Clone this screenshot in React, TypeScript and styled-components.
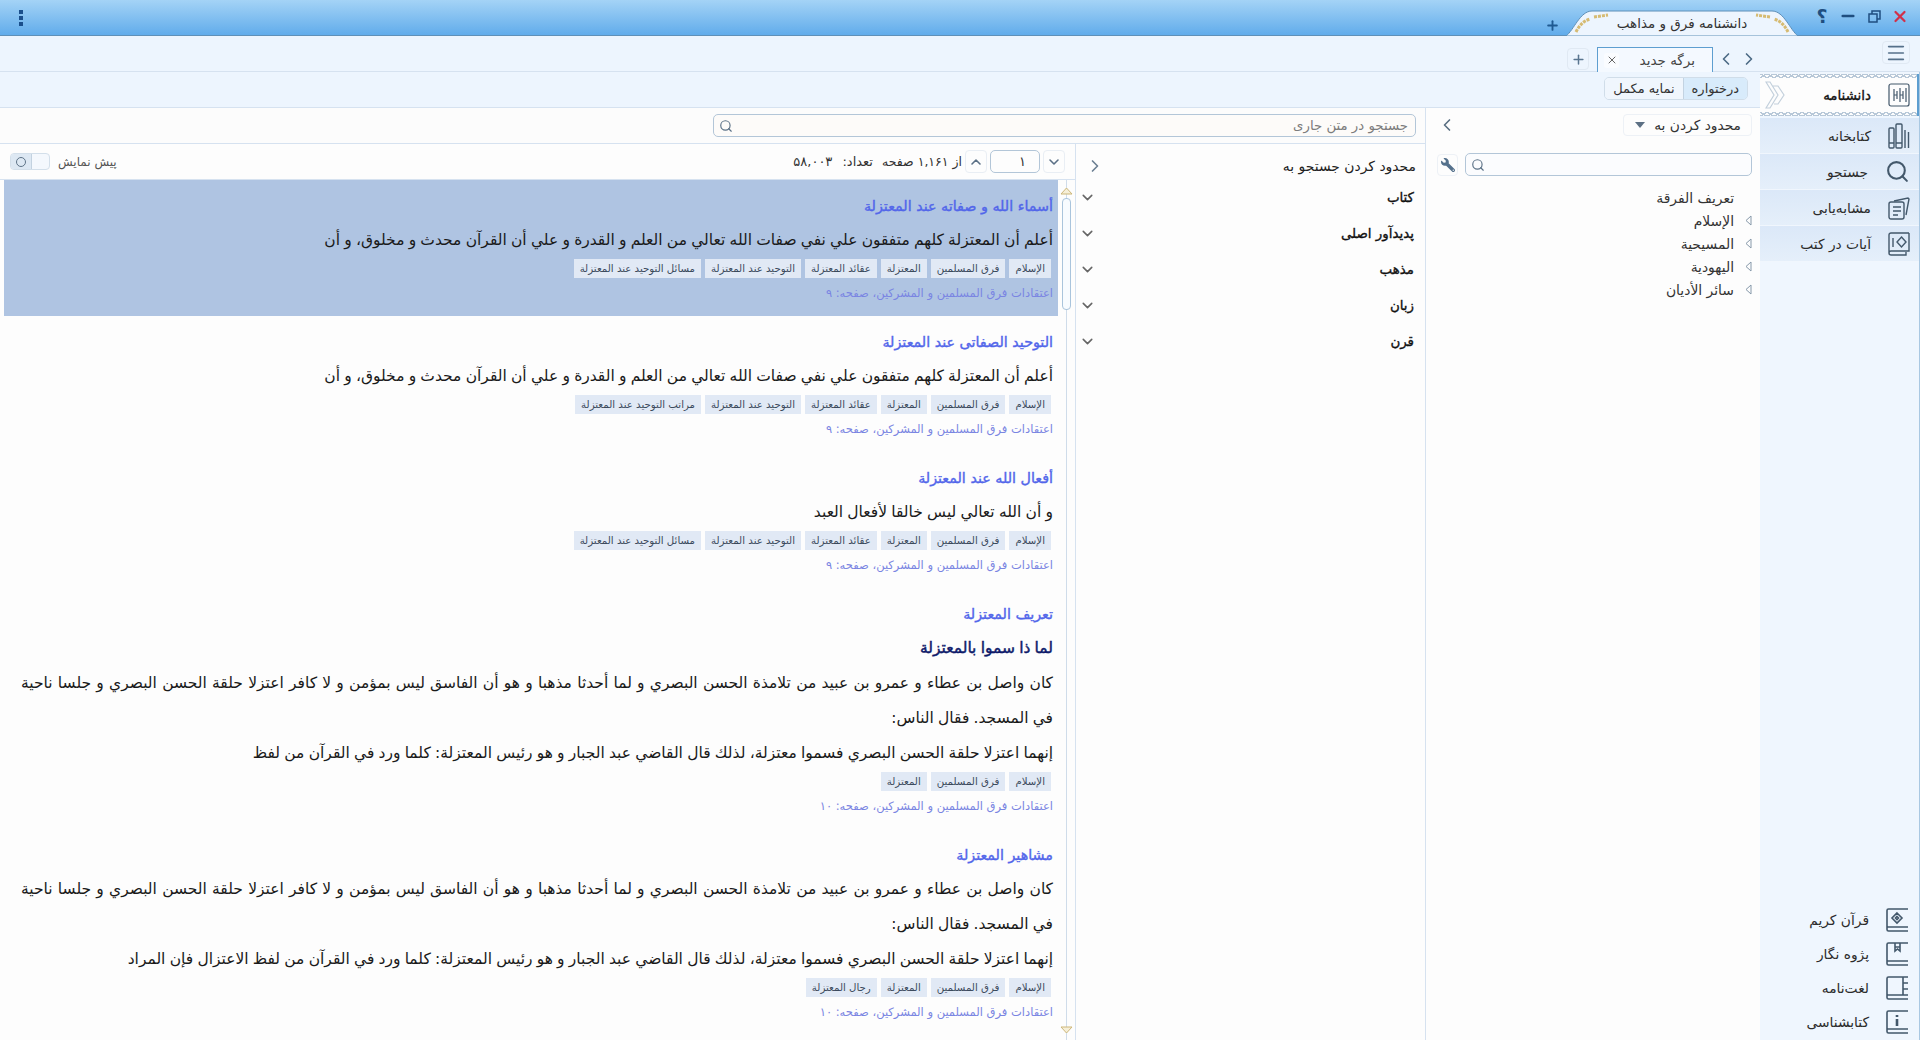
import { ReactNode } from 'react';
import styled, { createGlobalStyle } from 'styled-components';
import { ChevronDown, ChevronLeft, ChevronRight, ChevronUp, Menu, Minus, Plus, Search, X } from 'lucide-react';
import { FaWrench } from 'react-icons/fa';

const UI_FONT = `"DejaVu Sans", "Noto Sans", sans-serif`;

const GlobalStyle = createGlobalStyle`
  html, body { margin: 0; height: 100%; overflow: hidden; background: #fdfdfd; }
  #root { height: 100%; }
  * { box-sizing: border-box; }
`;

const Page = styled.div`
  height: 1040px;
  display: flex;
  flex-direction: column;
  font-family: ${UI_FONT};
  color: #222;
  background: #fdfdfd;
`;

const TitleBar = styled.div`
  height: 36px;
  flex: none;
  display: flex;
  align-items: flex-end;
  padding: 0 11px 0 14px;
  background: linear-gradient(#a4d3f6, #61aceb);
  border-bottom: 1px solid #5f90b8;
`;

const WindowButtons = styled.div`
  display: flex;
  align-items: center;
  gap: 8px;
  height: 35px;
  padding-bottom: 3px;
  margin-left: 15px;
`;

const WindowButton = styled.div`
  width: 18px;
  height: 18px;
  display: flex;
  align-items: center;
  justify-content: center;
  color: #1f4e80;
  font-size: 19px;
  font-weight: bold;
`;

const DocTab = styled.div`
  position: relative;
  width: 232px;
  height: 26px;
  margin-bottom: -1px;
  display: flex;
  align-items: center;
  justify-content: center;
  font-size: 13.5px;
  color: #333;
`;

const DocTabShape = styled.svg`
  position: absolute;
  inset: 0;
`;

const DocTabLabel = styled.span`
  position: relative;
`;

const AddDoc = styled.div`
  color: #1f5a92;
  display: flex;
  margin: 0 6px 2px 0;
`;

const Dots = styled.div`
  margin: 0 auto 9px 0;
  display: flex;
  flex-direction: column;
  gap: 2px;
  padding-left: 5px;
  span {
    width: 4px;
    height: 4px;
    background: #1a4f8c;
  }
`;

const TabBar = styled.div`
  height: 36px;
  flex: none;
  display: flex;
  align-items: flex-end;
  padding-right: 10px;
  background: #edf5fe;
  border-bottom: 1px solid #d6e2f0;
`;

const Hamburger = styled.div`
  width: 28px;
  height: 23px;
  margin: 0 0 7px 0;
  display: flex;
  align-items: center;
  justify-content: center;
  color: #55708a;
  border: 1px solid #e0e9f3;
  border-radius: 4px;
`;

const TabNav = styled.div`
  display: flex;
  gap: 3px;
  margin: 0 123px 2px 0;
  color: #4c6a85;
  svg { display: block; }
`;

const PageTab = styled.div`
  width: 116px;
  height: 25px;
  margin: 0 3px -1px 0;
  display: flex;
  align-items: center;
  justify-content: space-between;
  padding: 0 17px 0 6px;
  font-size: 13.5px;
  color: #444;
  background: #f4f9ff;
  border: 1px solid #5d9ed0;
  border-bottom: none;
`;

const TabClose = styled.span`
  width: 15px;
  height: 15px;
  display: flex;
  align-items: center;
  justify-content: center;
  color: #555;
  background: #fafcff;
  border-radius: 3px;
`;

const AddTab = styled.div`
  width: 22px;
  height: 22px;
  margin: 0 8px 1px 0;
  display: flex;
  align-items: center;
  justify-content: center;
  color: #5a7690;
  border: 1px solid #e0e9f3;
  border-radius: 4px;
`;

const Body = styled.div`
  flex: 1;
  min-height: 0;
  display: flex;
`;

const Rail = styled.nav`
  width: 160px;
  flex: none;
  display: flex;
  flex-direction: column;
  padding-top: 2px;
  background: #eff6fe;
  border-right: 1px solid #a9c8e2;
`;

const RailItem = styled.div`
  height: 36px;
  display: flex;
  align-items: center;
  gap: 17px;
  padding-right: 9px;
  font-size: 13.8px;
  color: #2c2c2c;
  background: linear-gradient(#dbe8f8, #e5effa);
  border-bottom: 1px solid #f0f6fd;
  svg { flex: none; color: #43586b; }
`;

const RailActive = styled(RailItem)`
  position: relative;
  height: 42px;
  margin-bottom: 2px;
  font-size: 13.4px;
  -webkit-text-stroke: 0.35px #111;
  color: #111;
  background: #fdfdfd;
  border-bottom: none;
  border-right: 2px solid #5d9ed0;
  padding-right: 7px;
  &::before, &::after {
    content: '';
    position: absolute;
    left: 0;
    right: 0;
    height: 5px;
    background-size: 7px 5px;
    background-repeat: repeat-x;
  }
  &::before {
    top: 0;
    background-image: linear-gradient(-33deg, transparent 50%, #b8c8d8 50%, #b8c8d8 65%, transparent 65%), linear-gradient(33deg, transparent 50%, #b8c8d8 50%, #b8c8d8 65%, transparent 65%);
  }
  &::after {
    bottom: 0;
    background-image: linear-gradient(147deg, transparent 50%, #b8c8d8 50%, #b8c8d8 65%, transparent 65%), linear-gradient(-147deg, transparent 50%, #b8c8d8 50%, #b8c8d8 65%, transparent 65%);
  }
`;

const RailChevrons = styled.svg`
  position: absolute;
  left: 5px;
  top: 7px;
`;

const RailBottom = styled.div`
  margin-top: auto;
  display: flex;
  flex-direction: column;
  padding-bottom: 1px;
`;

const RailLink = styled.div`
  height: 34px;
  display: flex;
  align-items: center;
  gap: 17px;
  font-size: 13.8px;
  color: #2c2c2c;
  padding-right: 11px;
  svg { flex: none; color: #43586b; }
`;

const Content = styled.div`
  flex: 1;
  min-width: 0;
  display: flex;
  flex-direction: column;
`;

const Toolbar = styled.div`
  height: 36px;
  flex: none;
  display: flex;
  align-items: center;
  padding-right: 12px;
  padding-bottom: 2px;
  background: #edf5fe;
  border-bottom: 1px solid #d6e2f0;
`;

const Segmented = styled.div`
  display: flex;
  height: 23px;
  border: 1px solid #d0dde9;
  border-radius: 5px;
  overflow: hidden;
`;

const Segment = styled.div<{ $on?: boolean }>`
  padding: 0 8px;
  display: flex;
  align-items: center;
  font-size: 13px;
  color: #333;
  background: ${p => (p.$on ? '#d8ebfb' : '#f0f6fd')};
  border-left: ${p => (p.$on ? '1px solid #c3d3e2' : 'none')};
`;

const Panels = styled.div`
  flex: 1;
  min-height: 0;
  display: flex;
`;

const TreePanel = styled.aside`
  width: 335px;
  flex: none;
  display: flex;
  flex-direction: column;
  padding: 6px 8px 0 11px;
  background: #fdfdfd;
  border-left: 1px solid #d6e2f0;
`;

const TreeTop = styled.div`
  display: flex;
  align-items: center;
  justify-content: space-between;
  height: 22px;
  color: #5a6f82;
`;

const ScopeSelect = styled.div`
  width: 129px;
  height: 22px;
  display: flex;
  align-items: center;
  justify-content: space-between;
  padding: 0 10px 0 11px;
  font-size: 13.8px;
  color: #333;
  border: 1px solid #edf1f6;
  border-radius: 4px;
`;

const Caret = styled.span`
  width: 0;
  height: 0;
  border: 5px solid transparent;
  border-top: 6px solid #5c7084;
  border-bottom: none;
`;

const TreeSearch = styled.div`
  display: flex;
  align-items: center;
  gap: 7px;
  margin-top: 17px;
`;

const SearchBox = styled.div`
  flex: 1;
  height: 23px;
  display: flex;
  align-items: center;
  padding: 0 7px 0 5px;
  color: #5c7287;
  background: #fbfcfe;
  border: 1px solid #b3c6d8;
  border-radius: 5px;
  font-size: 13px;
`;

const Placeholder = styled.span`
  flex: 1;
  color: #7c7c7c;
  font-size: 13.3px;
`;

const ToolButton = styled.div`
  width: 21px;
  height: 22px;
  display: flex;
  align-items: center;
  justify-content: center;
  color: #55718c;
  border: 1px solid #edf1f6;
  border-radius: 4px;
  svg { transform: scaleX(-1); }
`;

const TreeList = styled.ul`
  list-style: none;
  margin: 10px 0 0;
  padding: 0;
`;

const TreeRow = styled.li`
  height: 23px;
  display: flex;
  align-items: center;
  gap: 11px;
  font-size: 13.9px;
  color: #333;
`;

const TreeArrow = styled.svg<{ $hidden?: boolean }>`
  flex: none;
  color: #8799aa;
  visibility: ${p => (p.$hidden ? 'hidden' : 'visible')};
`;

const Main = styled.main`
  flex: 1;
  min-width: 0;
  display: flex;
  flex-direction: column;
`;

const SearchRow = styled.div`
  height: 36px;
  flex: none;
  padding: 6px 9px 0 9px;
  border-bottom: 1px solid #d6e2f0;
  background: #fcfcfc;
`;

const TextSearch = styled(SearchBox)`
  width: 703px;
  background: #fdfbf9;
`;

const Columns = styled.div`
  flex: 1;
  min-height: 0;
  display: flex;
`;

const FilterPanel = styled.aside`
  width: 350px;
  flex: none;
  padding: 0 9px 0 0;
  border-left: 1px solid #d6e2f0;
`;

const FilterHead = styled.div`
  height: 35px;
  padding: 8px 0 0 9px;
  display: flex;
  align-items: center;
  justify-content: space-between;
  font-size: 13.9px;
  color: #222;
  svg { color: #6b7f92; }
`;

const FilterRow = styled.div`
  height: 36px;
  display: flex;
  align-items: center;
  justify-content: space-between;
  padding: 0 2px 0 3px;
  font-size: 13.4px;
  -webkit-text-stroke: 0.35px #111;
  color: #111;
  svg { color: #666; }
`;

const Results = styled.section`
  flex: 1;
  min-width: 0;
  display: flex;
  flex-direction: column;
`;

const ResultsHead = styled.div`
  height: 36px;
  flex: none;
  display: flex;
  align-items: center;
  padding: 0 10px 0 10px;
  font-size: 12.5px;
  color: #333;
  border-bottom: 1px solid #d6e2f0;
`;

const Pager = styled.div`
  width: 22px;
  height: 23px;
  display: flex;
  align-items: center;
  justify-content: center;
  color: #5b7086;
  border: 1px solid #e9eef4;
  border-radius: 4px;
`;

const PageInput = styled.div`
  width: 50px;
  height: 23px;
  margin: 0 3px;
  display: flex;
  align-items: center;
  padding: 0 13px;
  font-size: 13px;
  border: 1px solid #b3c6d8;
  border-radius: 5px;
`;

const PagerText = styled.span`
  margin-right: 3px;
`;

const CountText = styled.span`
  margin-right: 9px;
  font-size: 13px;
  word-spacing: 6px;
`;

const Preview = styled.div`
  margin-right: auto;
  display: flex;
  align-items: center;
  gap: 8px;
  font-size: 12px;
  color: #555;
`;

const Toggle = styled.div`
  width: 40px;
  height: 17px;
  display: flex;
  justify-content: flex-end;
  border: 1px solid #d3dfea;
  border-radius: 4px;
  background: #f4f8fd;
  span {
    width: 21px;
    display: flex;
    align-items: center;
    justify-content: center;
    background: #dde8f3;
    border-right: 1px solid #c3d2e0;
    border-radius: 3px 0 0 3px;
  }
  span::after {
    content: '';
    width: 8px;
    height: 8px;
    border: 1px solid #5f7488;
    border-radius: 50%;
  }
`;

const ResultsBody = styled.div`
  flex: 1;
  min-height: 0;
  display: flex;
`;

const Track = styled.div`
  position: relative;
  width: 17px;
  flex: none;
  display: flex;
  flex-direction: column;
  align-items: center;
  padding-top: 7px;
  padding-bottom: 6px;
  &::before {
    content: '';
    position: absolute;
    top: 0;
    bottom: 0;
    left: 8px;
    width: 1px;
    background: #cfdcea;
  }
`;

const Thumb = styled.div`
  position: relative;
  width: 9px;
  height: 112px;
  margin-top: 3px;
  background: #f7fbff;
  border: 1px solid #a9c4dc;
  border-radius: 4px;
`;

const TrackArrow = styled.svg<{ $end?: boolean }>`
  position: relative;
  margin-top: ${p => (p.$end ? 'auto' : '0')};
`;

const List = styled.div`
  flex: 1;
  min-width: 0;
  margin-left: 4px;
  overflow: hidden;
`;

const Row = styled.article<{ $selected?: boolean }>`
  padding: 9px 5px 11px 17px;
  background: ${p => (p.$selected ? '#afc4e2' : 'transparent')};
`;

const RowTitle = styled.h3`
  margin: 0;
  height: 35px;
  line-height: 35px;
  font-size: 14.3px;
  font-weight: normal;
  -webkit-text-stroke: 0.4px #5266ea;
  color: #5266ea;
`;

const Line = styled.p<{ $strong?: boolean; $full?: boolean }>`
  margin: 0;
  height: 35px;
  line-height: 33px;
  white-space: ${p => (p.$full ? 'normal' : 'nowrap')};
  text-align-last: ${p => (p.$full ? 'justify' : 'auto')};
  font-size: 15.5px;
  word-spacing: ${p => (p.$full ? '0' : '-0.7px')};
  -webkit-text-stroke: ${p => (p.$strong ? '0.45px #0e1a6a' : '0')};
  color: ${p => (p.$strong ? '#0e1a6a' : '#1a1a1a')};
`;

const Tags = styled.div`
  height: 19px;
  display: flex;
  gap: 4px;
  padding-right: 2px;
`;

const Tag = styled.span`
  height: 19px;
  line-height: 19px;
  padding: 0 6px;
  font-size: 10.2px;
  color: #3b4a5c;
  background: #e1e9f5;
  white-space: nowrap;
`;

const Source = styled.div`
  height: 24px;
  margin-top: 3px;
  line-height: 24px;
  font-size: 11.5px;
  color: #7a85e2;
`;

const Arrow = ({ hidden }: { hidden?: boolean }) => (
  <TreeArrow $hidden={hidden} width="7" height="11" viewBox="0 0 7 11" fill="none" stroke="currentColor">
    <path d="M6 1 1 5.5 6 10Z" />
  </TreeArrow>
);

const BookIcon = ({ children }: { children?: ReactNode }) => (
  <svg width="22" height="24" viewBox="0 0 22 24" fill="none" stroke="currentColor" strokeWidth="1.6">
    <path d="M22 1H2.5A1.5 1.5 0 0 0 1 2.5v19A1.5 1.5 0 0 0 2.5 23H22M1 19.5A1.5 1.5 0 0 1 2.5 19H22" />
    {children}
  </svg>
);

const EncyclopediaIcon = () => (
  <svg width="22" height="24" viewBox="0 0 22 24" fill="none" stroke="currentColor" strokeWidth="1.2">
    <rect x="1" y="1" width="20" height="22" rx="2" />
    <path d="M6 6v12M9 8v8M6 12h3M12 5v14M15 8v8M12 12h3M18 5v14" />
  </svg>
);

const LibraryIcon = () => (
  <svg width="22" height="26" viewBox="0 0 22 26" fill="none" stroke="currentColor" strokeWidth="1.4">
    <rect x="1" y="5" width="5" height="20" rx="1" />
    <rect x="8" y="1" width="6" height="24" rx="1" />
    <path d="M17 7v18M20.5 9v16M1 20h5M8 20h6" />
  </svg>
);

const SimilarIcon = () => (
  <svg width="22" height="24" viewBox="0 0 22 24" fill="none" stroke="currentColor" strokeWidth="1.4">
    <path d="M6 5 20 2l1 1-3 16" />
    <rect x="1" y="6" width="15" height="17" rx="2" />
    <path d="M5 11h8M5 15h8M5 19h5" />
  </svg>
);

const VersesIcon = () => (
  <svg width="22" height="24" viewBox="0 0 22 24" fill="none" stroke="currentColor" strokeWidth="1.4">
    <path d="M21 1H3a2 2 0 0 0-2 2v18a2 2 0 0 0 2 2h15v-3M1 21a2 2 0 0 1 2-2h18V1" />
    <path d="M5 6v9" />
    <path d="m13.5 5 4.5 5-4.5 5-4.5-5Z" />
  </svg>
);

const RESULT_TAGS = ['الإسلام', 'فرق المسلمين', 'المعتزلة'];
const SOURCE = 'اعتقادات فرق المسلمين و المشركين، صفحه: ';
const NO_VERB = 'أعلم أن المعتزلة كلهم متفقون علي نفي صفات الله تعالي من العلم و القدرة و علي أن القرآن محدث و مخلوق، و أن';
const WASIL = 'كان واصل بن عطاء و عمرو بن عبيد من تلامذة الحسن البصري و لما أحدثا مذهبا و هو أن الفاسق ليس بمؤمن و لا كافر اعتزلا حلقة الحسن البصري و جلسا ناحية';
const MOSQUE = 'في المسجد. فقال الناس:';

const results = [
  {
    title: 'أسماء الله و صفاته عند المعتزلة',
    selected: true,
    lines: [NO_VERB],
    tags: [...RESULT_TAGS, 'عقائد المعتزلة', 'التوحيد عند المعتزلة', 'مسائل التوحيد عند المعتزلة'],
    page: '۹',
  },
  {
    title: 'التوحيد الصفاتی عند المعتزلة',
    lines: [NO_VERB],
    tags: [...RESULT_TAGS, 'عقائد المعتزلة', 'التوحيد عند المعتزلة', 'مراتب التوحيد عند المعتزلة'],
    page: '۹',
  },
  {
    title: 'أفعال الله عند المعتزلة',
    lines: ['و أن الله تعالي ليس خالقا لأفعال العبد'],
    tags: [...RESULT_TAGS, 'عقائد المعتزلة', 'التوحيد عند المعتزلة', 'مسائل التوحيد عند المعتزلة'],
    page: '۹',
  },
  {
    title: 'تعريف المعتزلة',
    subtitle: 'لما ذا سموا بالمعتزلة',
    lines: [WASIL, MOSQUE, 'إنهما اعتزلا حلقة الحسن البصري فسموا معتزلة، لذلك قال القاضي عبد الجبار و هو رئيس المعتزلة: كلما ورد في القرآن من لفظ'],
    tags: RESULT_TAGS,
    page: '۱۰',
  },
  {
    title: 'مشاهير المعتزلة',
    lines: [WASIL, MOSQUE, 'إنهما اعتزلا حلقة الحسن البصري فسموا معتزلة، لذلك قال القاضي عبد الجبار و هو رئيس المعتزلة: كلما ورد في القرآن من لفظ الاعتزال فإن المراد'],
    tags: [...RESULT_TAGS, 'رجال المعتزلة'],
    page: '۱۰',
  },
];

const railItems = [
  { label: 'کتابخانه', icon: <LibraryIcon /> },
  { label: 'جستجو', icon: <Search size={25} strokeWidth={2} /> },
  { label: 'مشابه‌یابی', icon: <SimilarIcon /> },
  { label: 'آیات در کتب', icon: <VersesIcon /> },
];

const railLinks = [
  { label: 'قرآن کریم', glyph: <path d="m11 5 5 5-5 5-5-5ZM11 8.5 12.5 10 11 11.500 9.500 10Z" /> },
  { label: 'پژوه نگار', glyph: <path d="M9 1v8l2.500-2L14 9V1M9 5h5" /> },
  { label: 'لغت‌نامه', glyph: <path d="M17 1v18M17 7h5M17 13h5" /> },
  { label: 'کتابشناسی', glyph: <path d="M11 5v2M11 9v7" strokeWidth="2.600" /> },
];

const filters = ['کتاب', 'پدیدآور اصلی', 'مذهب', 'زبان', 'قرن'];
const tree = ['تعريف الفرقة', 'الإسلام', 'المسيحية', 'اليهودية', 'سائر الأديان'];

export default function App() {
  return (
    <Page dir="rtl">
      <GlobalStyle />
      <TitleBar>
        <WindowButtons>
          <WindowButton>
            <X size={19} strokeWidth={3} color="#d0304a" />
          </WindowButton>
          <WindowButton>
            <svg width="13" height="13" viewBox="0 0 13 13" fill="none" stroke="#1f4e80" strokeWidth="1.500">
              <rect x="1" y="4" width="8" height="8" />
              <path d="M4 4V1h8v8H9" />
            </svg>
          </WindowButton>
          <WindowButton>
            <Minus size={18} strokeWidth={3.500} />
          </WindowButton>
          <WindowButton>؟</WindowButton>
        </WindowButtons>
        <DocTab>
          <DocTabShape width="232" height="26" viewBox="0 0 232 26">
            <path d="M0 26C8 20 14 1 26 1H206C218 1 224 20 232 26Z" fill="#edf5fe" stroke="#5f90b8" />
            <path d="M10 22C13 16 17 11 24 9M28 7 42 5M222 22C219 16 215 11 208 9M204 7 190 5" fill="none" stroke="#d6bb72" strokeWidth="3" strokeDasharray="3 1" />
          </DocTabShape>
          <DocTabLabel>دانشنامه فرق و مذاهب</DocTabLabel>
        </DocTab>
        <AddDoc>
          <Plus size={15} strokeWidth={3} />
        </AddDoc>
        <Dots>
          <span />
          <span />
          <span />
        </Dots>
      </TitleBar>

      <TabBar>
        <Hamburger>
          <Menu size={22} strokeWidth={1.800} />
        </Hamburger>
        <TabNav>
          <ChevronRight size={20} strokeWidth={2} />
          <ChevronLeft size={20} strokeWidth={2} />
        </TabNav>
        <PageTab>
          برگه جدید
          <TabClose>
            <X size={12} strokeWidth={1.800} />
          </TabClose>
        </PageTab>
        <AddTab>
          <Plus size={15} strokeWidth={2.400} />
        </AddTab>
      </TabBar>

      <Body>
        <Rail>
          <RailActive>
            <EncyclopediaIcon />
            دانشنامه
            <RailChevrons width="20" height="28" viewBox="0 0 20 28" fill="none" stroke="#c3d0dc" strokeWidth="1.200">
              <path d="M1 1h4l8 13-8 13H1l8-13ZM7 5l6 0 6 9-6 9H9" />
            </RailChevrons>
          </RailActive>
          {railItems.map(item => (
            <RailItem key={item.label}>
              {item.icon}
              {item.label}
            </RailItem>
          ))}
          <RailBottom>
            {railLinks.map(item => (
              <RailLink key={item.label}>
                <BookIcon>{item.glyph}</BookIcon>
                {item.label}
              </RailLink>
            ))}
          </RailBottom>
        </Rail>

        <Content>
          <Toolbar>
            <Segmented>
              <Segment $on>درختواره</Segment>
              <Segment>نمایه مکمل</Segment>
            </Segmented>
          </Toolbar>

          <Panels>
            <TreePanel>
              <TreeTop>
                <ScopeSelect>
                  محدود کردن به
                  <Caret />
                </ScopeSelect>
                <ChevronLeft size={20} strokeWidth={2} />
              </TreeTop>
              <TreeSearch>
                <SearchBox>
                  <Placeholder />
                  <Search size={14} strokeWidth={2} />
                </SearchBox>
                <ToolButton>
                  <FaWrench size={14} />
                </ToolButton>
              </TreeSearch>
              <TreeList>
                {tree.map((item, i) => (
                  <TreeRow key={item}>
                    <Arrow hidden={i === 0} />
                    {item}
                  </TreeRow>
                ))}
              </TreeList>
            </TreePanel>

            <Main>
              <SearchRow>
                <TextSearch>
                  <Placeholder>جستجو در متن جاری</Placeholder>
                  <Search size={14} strokeWidth={2} />
                </TextSearch>
              </SearchRow>
              <Columns>
                <FilterPanel>
                  <FilterHead>
                    محدود کردن جستجو به
                    <ChevronRight size={20} strokeWidth={2} />
                  </FilterHead>
                  {filters.map(item => (
                    <FilterRow key={item}>
                      {item}
                      <ChevronDown size={17} strokeWidth={2.200} />
                    </FilterRow>
                  ))}
                </FilterPanel>

                <Results>
                  <ResultsHead>
                    <Pager>
                      <ChevronDown size={16} strokeWidth={2.400} />
                    </Pager>
                    <PageInput>۱</PageInput>
                    <Pager>
                      <ChevronUp size={16} strokeWidth={2.400} />
                    </Pager>
                    <PagerText>از ۱,۱۶۱ صفحه</PagerText>
                    <CountText>تعداد: ۵۸,۰۰۳</CountText>
                    <Preview>
                      پیش نمایش
                      <Toggle>
                        <span />
                      </Toggle>
                    </Preview>
                  </ResultsHead>
                  <ResultsBody>
                    <Track>
                      <TrackArrow width="13" height="8" viewBox="0 0 13 8" fill="#f6efd8" stroke="#cdb77a">
                        <path d="M6.500 1 12 7H1Z" />
                      </TrackArrow>
                      <Thumb />
                      <TrackArrow $end width="13" height="8" viewBox="0 0 13 8" fill="#f6efd8" stroke="#cdb77a">
                        <path d="M6.500 7 12 1H1Z" />
                      </TrackArrow>
                    </Track>
                    <List>
                      {results.map(result => (
                        <Row key={result.title} $selected={result.selected}>
                          <RowTitle>{result.title}</RowTitle>
                          {result.subtitle && <Line $strong>{result.subtitle}</Line>}
                          {result.lines.map((line, i) => (
                            <Line key={i} $full={line === WASIL}>{line}</Line>
                          ))}
                          <Tags>
                            {result.tags.map(tag => (
                              <Tag key={tag}>{tag}</Tag>
                            ))}
                          </Tags>
                          <Source>
                            {SOURCE}
                            {result.page}
                          </Source>
                        </Row>
                      ))}
                    </List>
                  </ResultsBody>
                </Results>
              </Columns>
            </Main>
          </Panels>
        </Content>
      </Body>
    </Page>
  );
}
